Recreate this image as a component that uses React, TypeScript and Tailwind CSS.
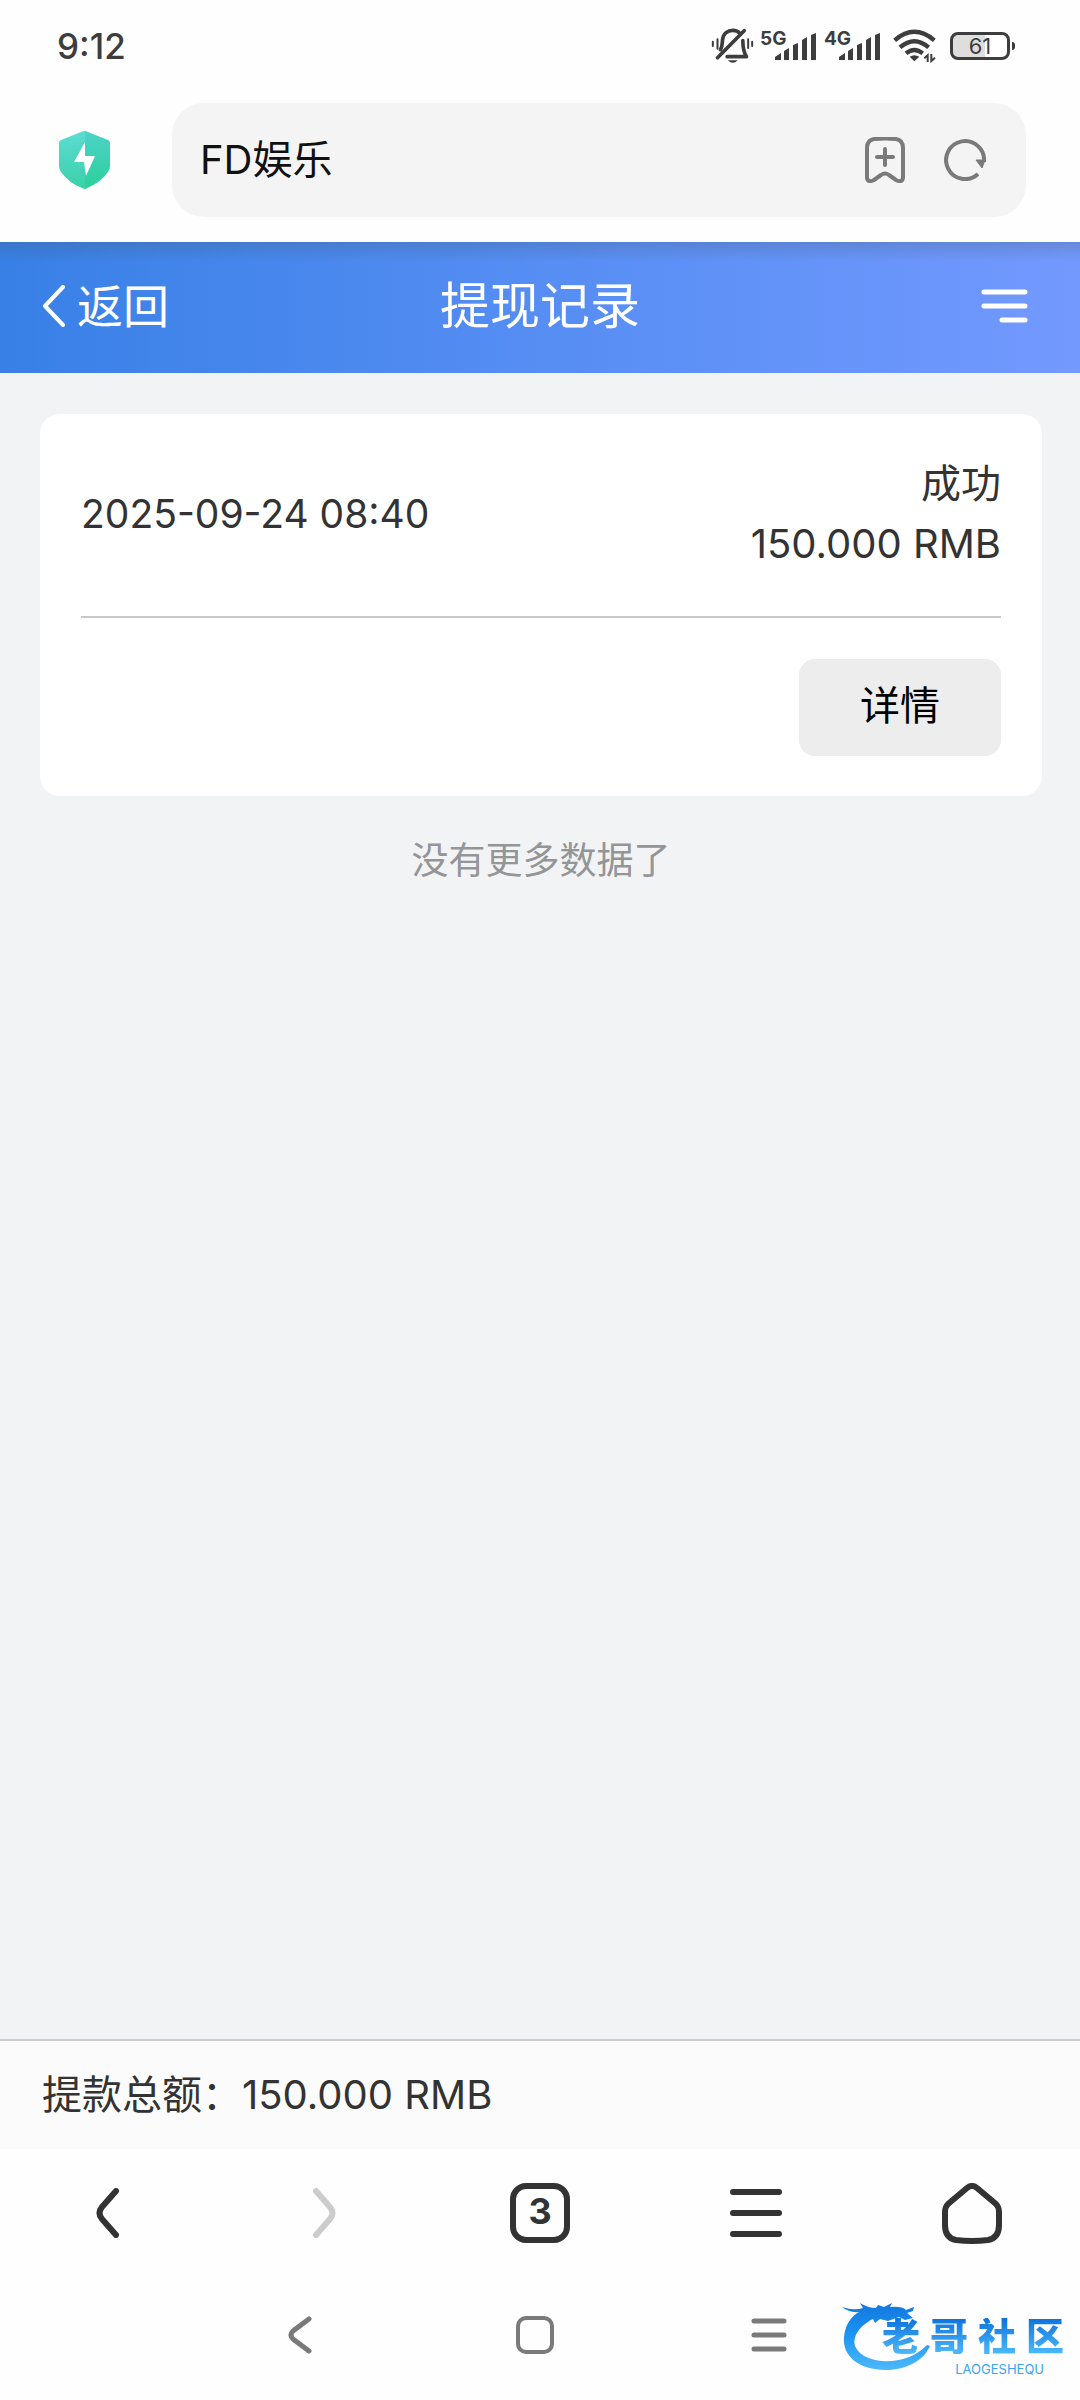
import React from "react";

const records = [
  { id: 1, time: "2025-09-24 08:40", status: "成功", amount: "150.000 RMB" },
];

const MutedBell = () => (
  <svg width="43" height="36" viewBox="32 38 128 108" fill="none" stroke="#3d3d3d" strokeWidth="11" strokeLinecap="round">
    <path d="M60 103 C66 94 65 84 66 74 C68 54 82 45 97 45 C106 45 113 48 118 54" />
    <path d="M127 76 C127 97 129 110 138 124 H80" strokeLinejoin="round" />
    <path d="M51 127 L131 46" />
    <path d="M82 135 Q97 150 112 135 Z" fill="#3d3d3d" stroke="none" />
    <path d="M37 79 V92 M51 72 V100 M143 72 V98 M155 79 V92" strokeWidth="6" />
  </svg>
);

const Signal = ({ label }: { label: string }) => (
  <svg width="57" height="36" viewBox="0 -6 57 36" fill="#3d3d3d" role="img" aria-label={label}>
    <text x="0" y="14" fontSize="19" fontWeight="700">
      {label}
    </text>
    <path d="M15 26 L21 22 V29 H15 Z M24 20 L29 17 V29 H24 Z M33 14 L38 12 V29 H33 Z M42 9 L47 6 V29 H42 Z M51 4 L56 2 V29 H51 Z" />
  </svg>
);

const Wifi = () => (
  <svg width="43" height="34" viewBox="577 43 129 102" fill="none" stroke="#3d3d3d" strokeWidth="13">
    <path d="M582 77 Q641 26 701 77" />
    <path d="M598 98 Q641 61 684 98" />
    <path d="M616 116 Q641 96 666 116" />
    <path d="M627 126 Q641 117 656 126 L641 140 Z" fill="#3d3d3d" stroke="none" />
    <path d="M681 142 V122 L671 131 M692 118 V139 L703 129" strokeWidth="6" />
  </svg>
);

const Battery = () => (
  <div className="flex items-center gap-[2px]">
    <div className="w-[60px] h-7 rounded-lg border-[3px] border-[#3d3d3d] flex items-center justify-center text-[22px] leading-none bg-linear-to-r from-[#dedede] from-60% to-white to-60%">
      61
    </div>
    <div className="w-[3px] h-2 rounded-r-sm bg-[#3d3d3d]" />
  </div>
);

const StatusBar = () => (
  <div className="h-[92px] pl-[57px] pr-[65px] flex items-center justify-between text-[#3d3d3d]">
    <span className="text-[35px] font-medium">9:12</span>
    <div className="flex items-center">
      <MutedBell />
      <div className="ml-[6px] mb-[6px] flex gap-[7px]">
        <Signal label="5G" />
        <Signal label="4G" />
      </div>
      <div className="ml-3 mr-[14px]">
        <Wifi />
      </div>
      <Battery />
    </div>
  </div>
);

const AddressBar = () => (
  <div className="pl-[59px] pr-[54px] pt-[11px] pb-[25px] flex items-center gap-[62px]">
    <svg width="51" height="58" viewBox="0 0 51 58">
      <defs>
        <linearGradient id="shieldLeft" x1="0" y1="0" x2="0" y2="1">
          <stop offset="0" stopColor="#5cdcd2" />
          <stop offset="1" stopColor="#3bd0a8" />
        </linearGradient>
        <linearGradient id="shieldRight" x1="0" y1="0" x2="0" y2="1">
          <stop offset="0" stopColor="#4dd3c8" />
          <stop offset="1" stopColor="#2bd09a" />
        </linearGradient>
      </defs>
      <path d="M26 0 Q24 0 22 1 L2 9 Q0 10 0 12 V35 Q0 38 2 41 Q10 52 23 57 Q25 58 26 58 Z" fill="url(#shieldLeft)" />
      <path d="M26 0 Q27 0 29 1 L49 9 Q51 10 51 12 V35 Q51 38 49 41 Q41 52 28 57 Q27 58 26 58 Z" fill="url(#shieldRight)" />
      <path d="M26 11 L15 31 H25 L27 45 L36 25 H26 Z" fill="white" />
    </svg>
    <div className="flex-1 h-[114px] pl-7 pr-10 rounded-[32px] bg-[#f4f4f4] flex items-center">
      <input
        aria-label="地址栏"
        defaultValue="FD娱乐"
        className="flex-1 min-w-0 bg-transparent outline-none text-[40px] text-[#111111]"
      />
      <button aria-label="添加书签" className="mr-[39px]">
        <svg width="40" height="46" viewBox="0 0 40 46" fill="none" stroke="#7a7a7a" strokeWidth="4" strokeLinecap="round" strokeLinejoin="round">
          <path d="M2 11 Q2 3 9 2 Q20 1 31 2 Q38 3 38 11 V41 Q37 46 31 43 L24 38 Q20 35 16 38 L9 43 Q3 46 2 41 Z" />
          <path d="M12 20 H28 M20 12 V28" />
        </svg>
      </button>
      <button aria-label="刷新">
        <svg width="42" height="42" viewBox="0 0 42 42" fill="none" stroke="#7a7a7a" strokeWidth="4">
          <path d="M34 35 A19 19 0 1 1 40 23" />
          <path d="M32 21 H41 L38 29 Z" fill="#7a7a7a" strokeWidth="1" strokeLinejoin="round" />
        </svg>
      </button>
    </div>
  </div>
);

const PageHeader = () => (
  <header className="h-[131px] pb-[3px] grid grid-cols-[1fr_auto_1fr] items-center text-white bg-[linear-gradient(to_bottom,rgba(60,80,90,0.22),transparent_20px),linear-gradient(to_right,#3880e6,#578ef4_52%,#7399fe)]">
    <button className="pl-[42px] flex items-center gap-3 text-[46px]">
      <svg width="23" height="42" viewBox="0 0 23 42" fill="none" stroke="white" strokeWidth="4" strokeLinecap="round" strokeLinejoin="round">
        <path d="M21 2 L3 21 L21 40" />
      </svg>
      返回
    </button>
    <h1 className="text-[50px]">提现记录</h1>
    <button aria-label="菜单" className="justify-self-end pr-[52px]">
      <svg width="47" height="34" viewBox="0 0 47 34" stroke="white" strokeWidth="5" strokeLinecap="round">
        <path d="M3 3 H44 M3 17 H44 M21 31 H44" />
      </svg>
    </button>
  </header>
);

const BrowserNav = () => (
  <nav className="h-32 grid grid-cols-5 items-center justify-items-center bg-[#fefefe]">
    <button aria-label="后退">
      <svg width="24" height="50" viewBox="0 0 24 50" fill="none" stroke="#333333" strokeWidth="6" strokeLinecap="round">
        <path d="M20 3 L6 19 Q1 25 6 31 L20 47" />
      </svg>
    </button>
    <button aria-label="前进">
      <svg width="24" height="50" viewBox="0 0 24 50" fill="none" stroke="#cccccc" strokeWidth="6" strokeLinecap="round">
        <path d="M4 3 L18 19 Q23 25 18 31 L4 47" />
      </svg>
    </button>
    <button className="size-[60px] pb-1 rounded-[16px] border-[6px] border-[#333333] text-[#333333] text-[36px] leading-none font-bold flex items-center justify-center">
      3
    </button>
    <button aria-label="浏览器菜单">
      <svg width="52" height="48" viewBox="0 0 52 48" stroke="#333333" strokeWidth="6" strokeLinecap="round">
        <path d="M3 3 H49 M3 24 H49 M3 45 H49" />
      </svg>
    </button>
    <button aria-label="主页">
      <svg width="60" height="61" viewBox="0 0 60 61" fill="none" stroke="#333333" strokeWidth="6" strokeLinejoin="round">
        <path d="M25 5 Q30 1 35 5 L54 21 Q57 24 57 29 V42 Q57 55 46 57 Q30 59 14 57 Q3 55 3 42 V29 Q3 24 6 21 Z" />
      </svg>
    </button>
  </nav>
);

const Watermark = () => (
  <div className="absolute right-[16px] bottom-[24px] w-[222px] h-[74px]">
    <svg width="92" height="70" viewBox="0 0 92 70" className="absolute left-0 top-0">
      <defs>
        <linearGradient id="dragon" x1="0" y1="0" x2="0" y2="1">
          <stop offset="0" stopColor="#1477dd" />
          <stop offset="0.4" stopColor="#1790f0" />
          <stop offset="1" stopColor="#4cb9fb" />
        </linearGradient>
      </defs>
      <path
        d="M0 5 Q12 9 21 6 L18 1 Q26 6 34 6 L36 3 L42 5 L50 1 L48 5 Q60 4 64 8 L72 5 L71 9 L65 11 L71 16 L63 18 L57 15 L46 19 L38 17 L33 21 L31 17 C17 24 9 36 14 46 C24 64 66 64 85 43 L88 44 C82 58 65 68 44 68 C17 68 0 54 2 35 C3 24 8 15 17 10 Q7 11 0 5 Z"
        fill="url(#dragon)"
      />
    </svg>
    <div className="absolute right-0 bottom-[22px] w-[182px] flex justify-between text-[38px] leading-[36px] font-black text-transparent bg-clip-text bg-linear-to-b from-[#0a72dc] to-[#4cb9fb]">
      <span>老</span>
      <span>哥</span>
      <span>社</span>
      <span>区</span>
    </div>
    <span className="absolute right-5 bottom-0 text-[13px] leading-[14px] text-[#3aa5f2]">LAOGESHEQU</span>
  </div>
);

const SystemNav = () => (
  <div className="relative h-[123px] pb-2 flex items-center justify-center bg-[#fefefe]">
    <div className="w-[66%] pr-[10px] grid grid-cols-3 items-center justify-items-center">
      <button aria-label="返回键" className="pr-[2px]">
        <svg width="24" height="38" viewBox="0 0 24 38" fill="none" stroke="#7a7a7a" strokeWidth="5" strokeLinecap="round">
          <path d="M21 3 L5 15 Q1 19 5 23 L21 35" />
        </svg>
      </button>
      <button aria-label="主屏幕键" className="size-[38px] rounded-[10px] border-4 border-[#7a7a7a]" />
      <button aria-label="最近任务键">
        <svg width="36" height="34" viewBox="0 0 36 34" stroke="#7a7a7a" strokeWidth="5" strokeLinecap="round">
          <path d="M3 3 H33 M3 17 H33 M3 31 H33" />
        </svg>
      </button>
    </div>
    <Watermark />
  </div>
);

const App = () => {
  return (
    <div className="min-h-screen flex flex-col bg-[#fefefe] font-['Inter','Noto_Sans_CJK_SC',sans-serif] text-[#333333]">
      <StatusBar />
      <AddressBar />
      <PageHeader />

      <main className="flex-1 pl-10 pr-[38px] pt-[41px] bg-[#f2f3f5]">
        {records.map((record) => (
          <section key={record.id} className="px-[41px] pt-10 pb-10 rounded-[20px] bg-white text-[40px]">
            <div className="pb-[42px] flex items-center justify-between border-b-2 border-[#c8c8c8] leading-[60px]">
              <time className="text-[39px]">{record.time}</time>
              <div className="text-right">
                <p>{record.status}</p>
                <p>{record.amount}</p>
              </div>
            </div>
            <div className="pt-[41px] flex justify-end">
              <button className="w-[202px] h-[97px] pb-[3px] rounded-[16px] bg-[#ededed] text-black">详情</button>
            </div>
          </section>
        ))}
        <p className="mt-[37px] text-center text-[37px] leading-[56px] text-[#949597]">没有更多数据了</p>
      </main>

      <div className="h-[110px] px-[42px] flex items-center border-t-2 border-[#cccccc] bg-[#fbfbfb] text-[40px]">
        提款总额：150.000 RMB
      </div>
      <BrowserNav />
      <SystemNav />
    </div>
  );
};

export default App;
